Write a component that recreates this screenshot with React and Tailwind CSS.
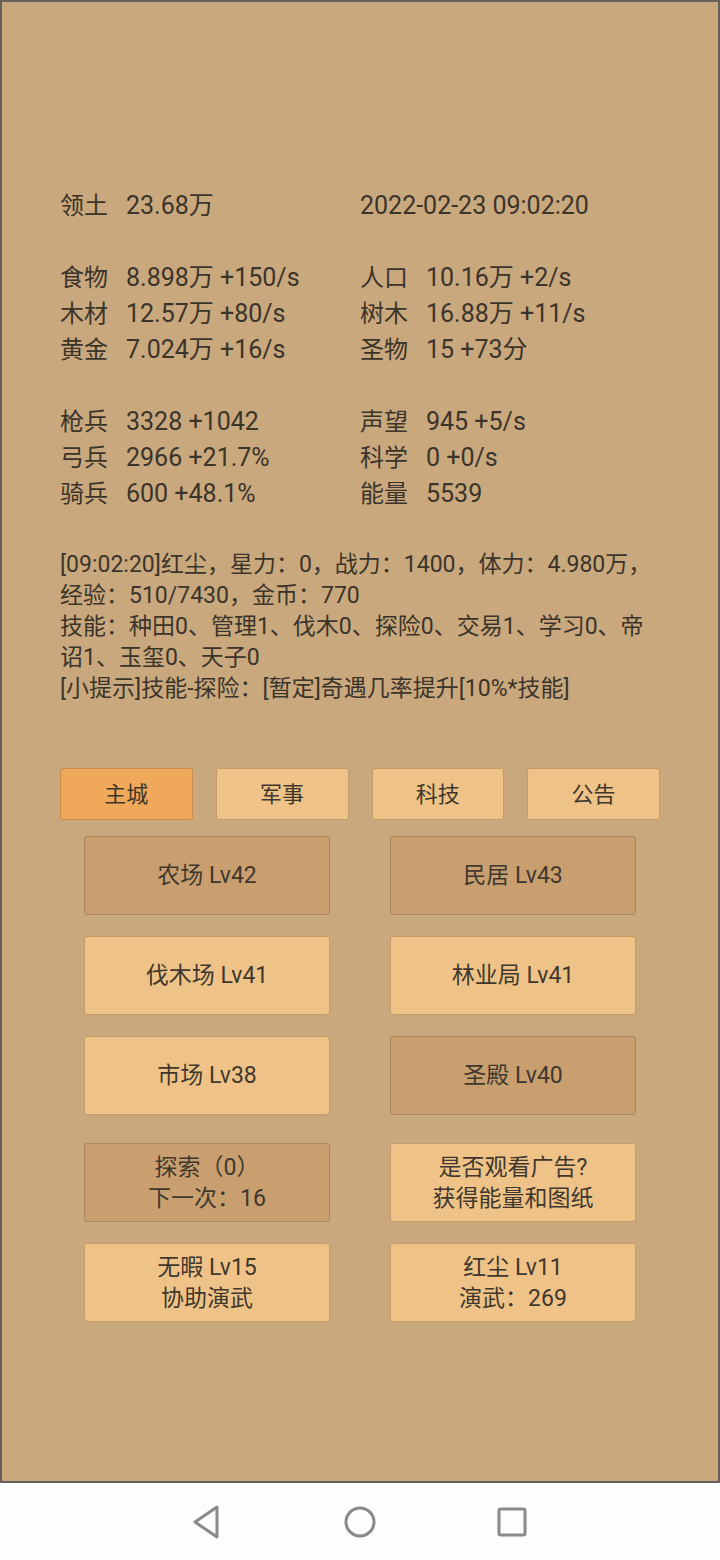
import React from "react";

const font = "font-['Roboto','Noto_Sans_CJK_SC',sans-serif]";

// 资源数据，null 为空行
const stats = [
  [["领土", "23.68万"], [null, "2022-02-23 09:02:20"]],
  null,
  [["食物", "8.898万 +150/s"], ["人口", "10.16万 +2/s"]],
  [["木材", "12.57万 +80/s"], ["树木", "16.88万 +11/s"]],
  [["黄金", "7.024万 +16/s"], ["圣物", "15 +73分"]],
  null,
  [["枪兵", "3328 +1042"], ["声望", "945 +5/s"]],
  [["弓兵", "2966 +21.7%"], ["科学", "0 +0/s"]],
  [["骑兵", "600 +48.1%"], ["能量", "5539"]],
];

const logLines = [
  "[09:02:20]红尘，星力：0，战力：1400，体力：4.980万，",
  "经验：510/7430，金币：770",
  "技能：种田0、管理1、伐木0、探险0、交易1、学习0、帝",
  "诏1、玉玺0、天子0",
  "[小提示]技能-探险：[暂定]奇遇几率提升[10%*技能]",
];

const tabs = ["主城", "军事", "科技", "公告"];

const buildings = [
  { lines: ["农场 Lv42"], dark: true },
  { lines: ["民居 Lv43"], dark: true },
  { lines: ["伐木场 Lv41"] },
  { lines: ["林业局 Lv41"] },
  { lines: ["市场 Lv38"] },
  { lines: ["圣殿 Lv40"], dark: true },
];

const extras = [
  { lines: ["探索（0）", "下一次：16"], dark: true },
  { lines: ["是否观看广告?", "获得能量和图纸"] },
  { lines: ["无暇 Lv15", "协助演武"] },
  { lines: ["红尘 Lv11", "演武：269"] },
];

function Cell({ cell }) {
  if (!cell) return <div />;
  const [label, value] = cell;
  return (
    <div className="flex whitespace-nowrap">
      {label && <span className="w-[66px]">{label}</span>}
      <span className="text-[25px]">{value}</span>
    </div>
  );
}

function BigButton({ item }) {
  return (
    <button
      className={
        "h-[79px] rounded-[3px] border flex flex-col items-center justify-center text-[23px] leading-[31px] text-[#40382e] " +
        (item.dark
          ? "bg-[#c99f6f] border-[#a8865e]"
          : "bg-[#efc387] border-[#c49c6b]")
      }
    >
      {item.lines.map((l) => (
        <span key={l}>{l}</span>
      ))}
    </button>
  );
}

export default function App() {
  return (
    <div className={"w-[720px] h-[1560px] flex flex-col " + font}>
      {/* 游戏主面板 */}
      <div className="h-[1483px] bg-[#c9a87d] border-2 border-[#66615a] pt-[186px] pl-[58px] text-[#3b342b]">
        <div className="grid grid-cols-[300px_300px] text-[24px] leading-[36px]">
          {stats.map((row, i) =>
            row ? (
              <React.Fragment key={i}>
                <Cell cell={row[0]} />
                <Cell cell={row[1]} />
              </React.Fragment>
            ) : (
              <div key={i} className="col-span-2 h-[36px]" />
            )
          )}
        </div>

        {/* 日志 */}
        <div className="mt-[37px] text-[23px] leading-[31px]">
          {logLines.map((l) => (
            <div key={l} className="whitespace-nowrap">
              {l}
            </div>
          ))}
        </div>

        {/* 标签 */}
        <div className="mt-[64px] w-[600px] grid grid-cols-4 gap-[23px]">
          {tabs.map((t, i) => (
            <button
              key={t}
              className={
                "h-[52px] rounded-[3px] border text-[22px] text-[#40382e] " +
                (i === 0
                  ? "bg-[#f0a95b] border-[#c88b4d]"
                  : "bg-[#efc387] border-[#c49c6b]")
              }
            >
              {t}
            </button>
          ))}
        </div>

        {/* 建筑 */}
        <div className="mt-[16px] ml-[24px] w-[552px] grid grid-cols-2 gap-x-[60px] gap-y-[21px]">
          {buildings.map((b) => (
            <BigButton key={b.lines[0]} item={b} />
          ))}
        </div>
        <div className="mt-[28px] ml-[24px] w-[552px] grid grid-cols-2 gap-x-[60px] gap-y-[21px]">
          {extras.map((b) => (
            <BigButton key={b.lines[0]} item={b} />
          ))}
        </div>
      </div>

      {/* 导航栏 */}
      <div className="h-[77px] bg-[#fdfdfd] flex items-center">
        <div className="w-[205px] flex justify-end pr-[0px]">
          <svg width="30" height="34" viewBox="0 0 30 34" fill="none" stroke="#8a8a8a" strokeWidth="3" strokeLinejoin="round" className="-mr-[16px]">
            <path d="M26 2 L4 17 L26 32 Z" />
          </svg>
        </div>
        <div className="ml-[138px]">
          <svg width="34" height="34" viewBox="0 0 34 34" fill="none" stroke="#8a8a8a" strokeWidth="3">
            <circle cx="17" cy="17" r="14" />
          </svg>
        </div>
        <div className="ml-[119px]">
          <svg width="32" height="32" viewBox="0 0 32 32" fill="none" stroke="#8a8a8a" strokeWidth="3">
            <rect x="3" y="3" width="26" height="26" rx="1.5" />
          </svg>
        </div>
      </div>
    </div>
  );
}
